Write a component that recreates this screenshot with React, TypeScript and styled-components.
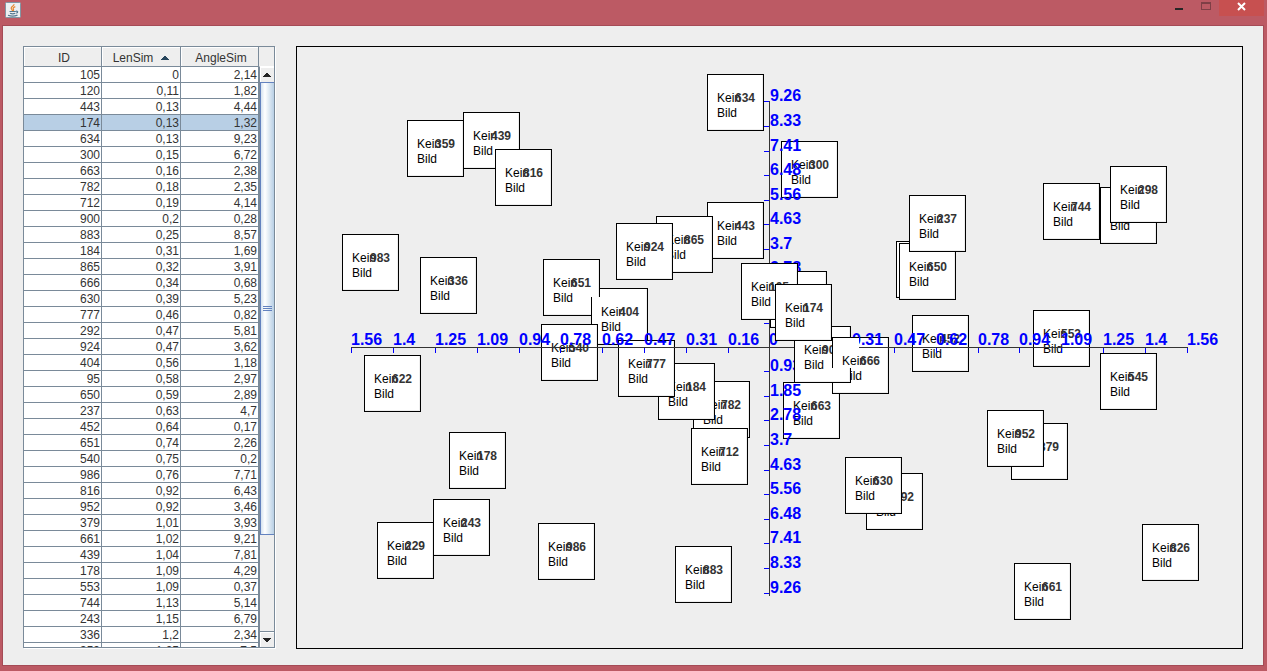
import React from 'react';
import styled, { createGlobalStyle, css } from 'styled-components';

const GlobalStyle = createGlobalStyle`
  html, body { margin: 0; height: 100%; }
  #root { height: 100%; }
  * { box-sizing: border-box; }
`;

const sans = '"Liberation Sans", Arial, sans-serif';
const line = '#7a8a99';

const Window = styled.div`
  display: flex;
  flex-direction: column;
  height: 100vh;
  overflow: hidden;
  padding: 0 3px 6px 2px;
  background: #bc5a64;
  font-family: ${sans};
  font-size: 12px;
  color: #333;
`;

const TitleBar = styled.header`
  display: flex;
  justify-content: space-between;
  align-items: flex-start;
  flex: none;
  height: 25px;
  padding-left: 3px;
`;

const AppIcon = styled.svg`
  display: block;
  width: 16px;
  height: 16px;
  margin-top: 2px;
`;

const WindowButtons = styled.div`
  display: flex;
`;

const WindowButton = styled.button<{ $close?: boolean }>`
  display: block;
  width: ${p => (p.$close ? 45 : 27)}px;
  height: 16px;
  padding: 0;
  border: 0;
  background: ${p => (p.$close ? '#c75050' : 'transparent')};
  svg { display: block; margin: 0 auto; }
`;

const Content = styled.main`
  display: flex;
  flex: 1;
  gap: 21px;
  min-height: 0;
  padding: 20px 20px 16px;
  border: 1px solid #a54b56;
  border-bottom: 0;
  box-shadow: 0 1px 0 #a54b56;
  background: #eee;
`;

const ScrollPane = styled.section`
  display: flex;
  flex: none;
  margin-bottom: 1px;
  border: 1px solid ${line};
  box-shadow: 1px 1px 0 #fff;
  overflow: hidden;
`;

const TableView = styled.div`
  overflow: hidden;
  background: #fff;
`;

const Table = styled.table`
  width: 235px;
  table-layout: fixed;
  border-collapse: separate;
  border-spacing: 0;
`;

const HeadCell = styled.th<{ $width: number; $sorted?: boolean }>`
  width: ${p => p.$width}px;
  height: 20px;
  padding: 2px 0 0 ${p => (p.$sorted ? 0 : 3)}px;
  border-right: 1px solid ${line};
  border-bottom: 1px solid ${line};
  background: #eee;
  box-shadow: inset 1px 1px 0 #fff;
  font-weight: normal;
  line-height: 16px;
  text-align: center;
  svg { margin-left: 8px; vertical-align: 2px; }
`;

const Row = styled.tr<{ $selected?: boolean }>`
  background: ${p => (p.$selected ? '#b8cfe5' : '#fff')};
`;

const Cell = styled.td`
  height: 16px;
  padding: 1px 1px 0 0;
  border-right: 1px solid ${line};
  border-bottom: 1px solid ${line};
  line-height: 14px;
  text-align: right;
`;

const ScrollSide = styled.div`
  display: flex;
  flex-direction: column;
  width: 15px;
`;

const Corner = styled.div`
  flex: none;
  height: 19px;
  background: #eee;
`;

const ScrollButton = styled.button<{ $down?: boolean }>`
  flex: none;
  width: 14px;
  height: ${p => (p.$down ? 16 : 15)}px;
  padding: 0;
  border: 0;
  ${p => p.$down && css`border-top: 1px solid ${line};`}
  background: #eee;
  box-shadow: inset 1px 1px 0 #fff;
  svg { display: block; margin: 0 auto; }
`;

const Bar = styled.div`
  display: flex;
  flex: 1;
  flex-direction: column;
  min-height: 0;
  border-top: 1px solid #fff;
  border-left: 1px solid ${line};
`;

const Track = styled.div`
  flex: 1;
  min-height: 0;
  background: #eee;
`;

const Thumb = styled.div`
  display: flex;
  flex-direction: column;
  align-items: center;
  justify-content: center;
  gap: 1px;
  height: round(82.6%, 1px);
  border: 1px solid #6382bf;
  border-right: 0;
  background: linear-gradient(to right, #d5e2f0, #fff 30%, #b8cfe5);
`;

const Grip = styled.span`
  width: 9px;
  height: 1px;
  background: #6382bf;
`;

const Plot = styled.section`
  position: relative;
  flex: 1;
  min-width: 0;
  overflow: hidden;
  border: 1px solid #000;
`;

const Origin = styled.div`
  position: absolute;
  left: round(down, 50%, 1px);
  top: round(down, 50%, 1px);
  width: 0;
  height: 0;
`;

const TileBox = styled.article`
  position: absolute;
  width: 57px;
  height: 57px;
  padding: 16px 0 0 9px;
  border: 1px solid #000;
  background: #fff;
  box-shadow: inset -1px -1px 0 #eee;
  color: #000;
  line-height: 15px;
`;

const TileId = styled.strong`
  position: absolute;
  left: 27px;
  top: 16px;
  color: #333;
`;

const AxisLine = styled.div<{ $vertical?: boolean }>`
  position: absolute;
  background: #333;
  ${p =>
    p.$vertical
      ? css`left: 0; top: -246px; width: 1px; height: 495px;`
      : css`left: -418px; top: 0; width: 837px; height: 1px;`}
`;

const AxisRest = styled(AxisLine)`
  left: 90px;
  width: 30px;
`;

const Tick = styled.div<{ $vertical?: boolean }>`
  position: absolute;
  width: ${p => (p.$vertical ? 5 : 1)}px;
  height: ${p => (p.$vertical ? 1 : 5)}px;
  background: #00f;
`;

const AxisLabel = styled.span`
  position: absolute;
  color: #00f;
  font-size: 16px;
  font-weight: bold;
  line-height: 18px;
  white-space: nowrap;
`;

const rows = `105 0 2,14|120 0,11 1,82|443 0,13 4,44|174 0,13 1,32|634 0,13 9,23|300 0,15 6,72|663 0,16 2,38|782 0,18 2,35|712 0,19 4,14|900 0,2 0,28|883 0,25 8,57|184 0,31 1,69|865 0,32 3,91|666 0,34 0,68|630 0,39 5,23|777 0,46 0,82|292 0,47 5,81|924 0,47 3,62|404 0,56 1,18|95 0,58 2,97|650 0,59 2,89|237 0,63 4,7|452 0,64 0,17|651 0,74 2,26|540 0,75 0,2|986 0,76 7,71|816 0,92 6,43|952 0,92 3,46|379 1,01 3,93|661 1,02 9,21|439 1,04 7,81|178 1,09 4,29|553 1,09 0,37|744 1,13 5,14|243 1,15 6,79|336 1,2 2,34|359 1,25 7,5`
  .split('|')
  .map(r => r.split(' '));

type TileData = [id: string, x: number, y: number, clip?: string];

/* Offsets of each tile's top left corner from the origin, in paint order. */
const backTiles: TileData[] = [
  ['634', -62, -273], ['359', -362, -227], ['439', -306, -235], ['816', -274, -198],
  ['300', 12, -206], ['983', -427, -113], ['336', -349, -90], ['651', -226, -88],
  ['404', -178, -59, 'polygon(9px 0, 100% 0, 100% 100%, 0 100%, 0 9px, 9px 9px)'],
  ['443', -62, -145], ['865', -113, -131], ['924', -153, -124],
  ['540', -228, -23], ['622', -405, 8], ['178', -320, 85], ['243', -336, 152],
  ['229', -392, 175], ['986', -231, 176], ['883', -94, 199], ['663', 14, 35],
  ['782', -76, 34], ['184', -111, 16], ['777', -151, -7], ['712', -78, 81],
  ['292', 97, 126], ['630', 76, 110], ['95', 127, -106], ['650', 130, -104],
  ['237', 140, -152], ['452', 143, -32], ['553', 264, -37], ['', 331, -160],
  ['744', 274, -164], ['298', 341, -181], ['545', 331, 6], ['379', 242, 76],
  ['952', 218, 63], ['826', 373, 177], ['661', 245, 216],
];

/* These cover the scales. The last but one lets 900 show at its lower left. */
const frontTiles: TileData[] = [
  ['120', 1, -76], ['105', -28, -84], ['900', 25, -21],
  ['666', 63, -10, 'polygon(0 0, 100% 0, 100% 100%, 0 100%, 0 46px, 19px 46px, 19px 31px, 0 31px)'],
  ['174', 6, -63],
];

const xScale: [string, number][] = [
  ['1.56', -418], ['1.4', -376], ['1.25', -334], ['1.09', -292], ['0.94', -250],
  ['0.78', -209], ['0.62', -167], ['0.47', -125], ['0.31', -83], ['0.16', -41],
  ['0', 0], ['0.47', 125], ['0.62', 167], ['0.78', 209], ['0.94', 250],
  ['1.09', 292], ['1.25', 334], ['1.4', 376], ['1.56', 418],
];

const yScale: [string, number][] = [
  ['9.26', -246], ['8.33', -221], ['7.41', -196], ['6.48', -172], ['5.56', -147],
  ['4.63', -123], ['3.7', -98], ['2.78', -74], ['', -24], ['0.93', 24], ['1.85', 49],
  ['2.78', 73], ['3.7', 98], ['4.63', 123], ['5.56', 147], ['6.48', 172],
  ['7.41', 196], ['8.33', 221], ['9.26', 246],
];

const Tile = ({ data: [id, x, y, clip] }: { data: TileData }) => (
  <TileBox style={{ left: x, top: y, clipPath: clip }}>
    Kein<br />Bild
    {id && <TileId>{id}</TileId>}
  </TileBox>
);

const Arrow = ({ down, color = '#222' }: { down?: boolean; color?: string }) => (
  <svg width="8" height="4" viewBox="0 0 8 4" shapeRendering="crispEdges" aria-hidden="true">
    <path fill={color} d={down ? 'M0 0h8v1h-1v1h-1v1h-1v1h-2v-1h-1v-1h-1v-1h-1z' : 'M3 0h2v1h1v1h1v1h1v1h-8v-1h1v-1h1v-1h1z'} />
  </svg>
);

export default function App() {
  return (
    <Window>
      <GlobalStyle />
      <TitleBar>
        <AppIcon viewBox="0 0 16 16" aria-hidden="true">
          <rect x="0.5" y="0.5" width="15" height="15" rx="1" fill="#edf0f2" stroke="#8196a3" />
          <path d="M9 2.2C9.4 4 6 4.600 6.200 6.200C6.300 7.300 7.500 7.600 7.400 9M10.300 4.600C8.300 5.400 7.600 6.300 8.500 7.300C8.900 7.900 8.500 8.500 8 9" fill="none" stroke="#e8862e" strokeWidth="1.200" />
          <path d="M4.500 9.500h6.300M5 11.300c1.500.6 3.800.6 5.300 0M10.900 9.300c2.200-.6 2.500 1.200.3 1.900M3 13.300c2.500.9 7 .9 9.500-.2" fill="none" stroke="#55788f" strokeWidth="1.200" />
        </AppIcon>
        <WindowButtons>
          <WindowButton aria-label="Minimize">
            <svg width="8" height="16"><path fill="#262626" d="M0 8h8v2H0z" /></svg>
          </WindowButton>
          <WindowButton aria-label="Maximize">
            <svg width="11" height="16" shapeRendering="crispEdges">
              <path fill="#7f3f46" fillRule="evenodd" d="M1 2h10v8H1zM2 4h8v5H2z" />
            </svg>
          </WindowButton>
          <WindowButton $close aria-label="Close">
            <svg width="9" height="16"><path d="M1 3l7 7M8 3l-7 7" stroke="#fff" strokeWidth="2" /></svg>
          </WindowButton>
        </WindowButtons>
      </TitleBar>
      <Content>
        <ScrollPane>
          <TableView>
            <Table>
              <thead>
                <tr>
                  <HeadCell $width={78}>ID</HeadCell>
                  <HeadCell $width={79} $sorted>LenSim<Arrow color="#27455c" /></HeadCell>
                  <HeadCell $width={78}>AngleSim</HeadCell>
                </tr>
              </thead>
              <tbody>
                {rows.map(r => (
                  <Row key={r[0]} $selected={r[0] === '174'}>
                    {r.map((v, i) => <Cell key={i}>{v}</Cell>)}
                  </Row>
                ))}
              </tbody>
            </Table>
          </TableView>
          <ScrollSide>
            <Corner />
            <Bar>
              <ScrollButton aria-label="Scroll up"><Arrow /></ScrollButton>
              <Track>
                <Thumb><Grip /><Grip /><Grip /></Thumb>
              </Track>
              <ScrollButton $down aria-label="Scroll down"><Arrow down /></ScrollButton>
            </Bar>
          </ScrollSide>
        </ScrollPane>
        <Plot>
          <Origin>
            {backTiles.map((t, i) => <Tile key={i} data={t} />)}
            {xScale.map(([text, x]) => (
              <React.Fragment key={x}>
                <Tick style={{ left: x, top: 1 }} />
                <AxisLabel style={{ left: x, top: -16 }}>{text}</AxisLabel>
              </React.Fragment>
            ))}
            {yScale.map(([text, y]) => (
              <React.Fragment key={y}>
                <Tick $vertical style={{ left: -5, top: y }} />
                {text && <AxisLabel style={{ left: 1, top: y - 14 }}>{text}</AxisLabel>}
              </React.Fragment>
            ))}
            <AxisLine />
            <AxisLine $vertical />
            {frontTiles.map((t, i) => <Tile key={i} data={t} />)}
            <AxisRest />
            <AxisLabel style={{ left: 83, top: -16, clipPath: 'polygon(0 0, 100% 0, 100% 100%, 7px 100%, 7px 6px, 0 6px)' }}>0.31</AxisLabel>
          </Origin>
        </Plot>
      </Content>
    </Window>
  );
}
